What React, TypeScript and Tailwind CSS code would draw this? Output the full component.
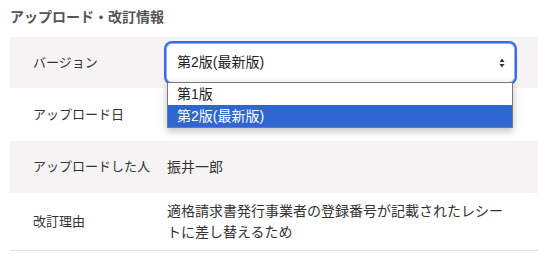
import React from "react";

const font = { fontFamily: '"Liberation Sans", "Noto Sans CJK JP", sans-serif' };

export default function App() {
  return (
    <div className="relative w-[547px] h-[264px] bg-white text-[#333]" style={font}>
      <div className="pl-[10px] pt-[8px] h-[37px] text-[14px] font-bold text-[#555] leading-[18px]">
        アップロード・改訂情報
      </div>
      <div className="ml-[10px] w-[528px]">
        <div className="flex items-center h-[51px] bg-[#f5f3f3]">
          <div className="w-[156px] pl-[23px] text-[13px]">バージョン</div>
          <div className="w-[349px] h-[40px] rounded-[6px] border border-[#8fb0f3] ring-2 ring-[#3a6ae6] bg-white flex items-center pl-[10px] pr-[9px]">
            <span className="flex-1 text-[14px] text-[#222]">第2版(最新版)</span>
            <svg width="6" height="10" viewBox="0 0 6 10">
              <path d="M3 0.5 L5.5 4 L0.5 4 Z" fill="#333" />
              <path d="M0.5 6 L5.5 6 L3 9.5 Z" fill="#333" />
            </svg>
          </div>
        </div>
        <div className="flex items-center h-[53px]">
          <div className="w-[157px] pl-[23px] text-[13px]">アップロード日</div>
        </div>
        <div className="flex items-center h-[52px] bg-[#f5f3f3]">
          <div className="w-[157px] pl-[23px] text-[13px]">アップロードした人</div>
          <div className="text-[14px]">振井一郎</div>
        </div>
        <div className="flex items-center h-[58px] border-b border-[#e3e3e3]">
          <div className="w-[157px] pl-[23px] text-[13px]">改訂理由</div>
          <div className="w-[345px] text-[14px] leading-[21px]">
            適格請求書発行事業者の登録番号が記載されたレシートに差し替えるため
          </div>
        </div>
      </div>
      <div className="absolute left-[167px] top-[82px] w-[346px] border border-[#7a7a7a] bg-white shadow-[0_3px_8px_rgba(0,0,0,0.25)] text-[14px]">
        <div className="h-[22px] leading-[22px] pl-[9px] text-[#222]">第1版</div>
        <div className="h-[22px] leading-[22px] pl-[9px] bg-[#2e66d2] text-white">第2版(最新版)</div>
      </div>
    </div>
  );
}
